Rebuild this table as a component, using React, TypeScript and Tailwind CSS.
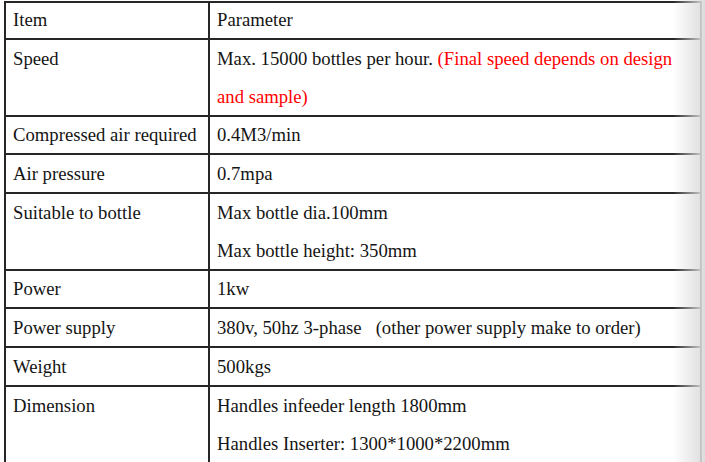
import React from "react";

// Lignes du tableau : libellé, valeurs (une par ligne de texte), hauteur de la rangée
interface Row {
  label: string;
  lines: React.ReactNode[];
  h: string;
}

const rows: Row[] = [
  {
    label: "Speed",
    lines: [
      <>
        Max. 15000 bottles per hour.{" "}
        <span className="text-[#ff0000]">(Final speed depends on design</span>
      </>,
      <span className="text-[#ff0000]">and sample)</span>,
    ],
    h: "h-[77px]",
  },
  { label: "Compressed air required", lines: ["0.4M3/min"], h: "h-[38px]" },
  { label: "Air pressure", lines: ["0.7mpa"], h: "h-[39px]" },
  {
    label: "Suitable to bottle",
    lines: ["Max bottle dia.100mm", "Max bottle height: 350mm"],
    h: "h-[77px]",
  },
  { label: "Power", lines: ["1kw"], h: "h-[38px]" },
  {
    label: "Power supply",
    lines: [
      <>
        380v, 50hz 3-phase<span className="inline-block w-[14px]" />
        (other power supply make to order)
      </>,
    ],
    h: "h-[39px]",
  },
  { label: "Weight", lines: ["500kgs"], h: "h-[39px]" },
  {
    label: "Dimension",
    lines: ["Handles infeeder length 1800mm", "Handles Inserter: 1300*1000*2200mm"],
    h: "h-[77px]",
  },
];

export default function App() {
  return (
    <div
      className="relative w-[705px] h-[462px] overflow-hidden bg-white text-[#141414] text-[18.7px]"
      style={{ fontFamily: '"Liberation Serif", "DejaVu Serif", serif' }}
    >
      {/* ================= TABLEAU ================= */}
      <div className="mt-px ml-[4px] w-[698px] border-t-2 border-x-2 border-[#262626]">
        {/* En-tête */}
        <div className="flex h-[37px] border-b-2 border-[#262626]">
          <div className="w-[204px] flex items-center pl-[7px] border-r-2 border-[#262626]">
            Item
          </div>
          <div className="flex-1 flex items-center pl-[7px]">Parameter</div>
        </div>

        {rows.map((row) => (
          <div
            key={row.label}
            className={`flex border-b-2 border-[#262626] ${row.h}`}
          >
            <div
              className={`w-[204px] pl-[7px] border-r-2 border-[#262626] leading-[38px] ${
                row.lines.length > 1 ? "" : "flex items-center"
              }`}
            >
              {row.label}
            </div>
            <div
              className={`flex-1 pl-[7px] leading-[38px] whitespace-nowrap ${
                row.lines.length > 1 ? "" : "flex items-center"
              }`}
            >
              {row.lines.map((l, i) => (
                <div key={i}>{l}</div>
              ))}
            </div>
          </div>
        ))}
      </div>

      {/* Ombre de page à droite */}
      <div className="pointer-events-none absolute top-0 right-0 h-full w-[32px] bg-gradient-to-r from-white/0 to-[#dcdcdc]" />
    </div>
  );
}
